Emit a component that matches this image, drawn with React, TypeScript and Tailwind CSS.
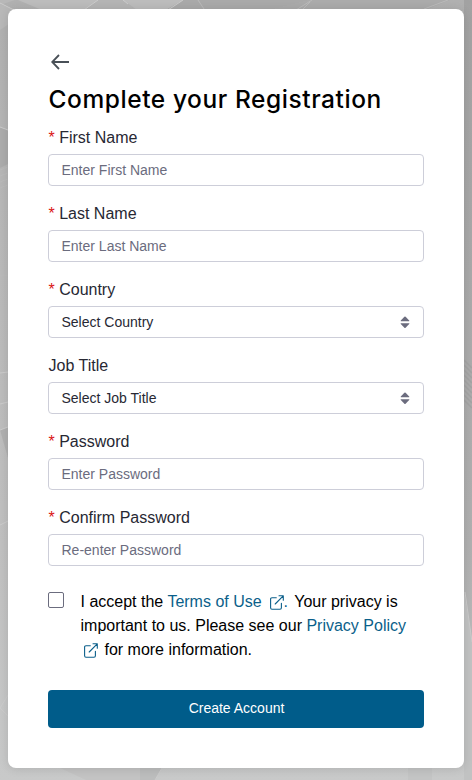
import { useState } from 'react';

interface FieldProps {
  id: string;
  label: string;
  placeholder: string;
  required?: boolean;
  type?: string;
}

const Label = ({ id, label, required }: { id: string; label: string; required?: boolean }) => (
  <label htmlFor={id} className="mb-1 block pl-[0.5px] text-base leading-6 text-[#272833]">
    {required && <span className="text-[#da1414]">* </span>}
    {label}
  </label>
);

const TextField = ({ id, label, placeholder, required, type = 'text' }: FieldProps) => (
  <div className="mb-4">
    <Label id={id} label={label} required={required} />
    <input
      id={id}
      type={type}
      placeholder={placeholder}
      className="block h-8 w-full rounded border border-[#cdced9] bg-white px-[12.5px] text-sm text-[#272833] placeholder:text-[#6b6c7e] placeholder:opacity-100"
    />
  </div>
);

const SelectField = ({ id, label, placeholder, required }: FieldProps) => (
  <div className="mb-4">
    <Label id={id} label={label} required={required} />
    <button
      id={id}
      type="button"
      className="flex h-8 w-full items-center justify-between rounded border border-[#cdced9] bg-white px-[12.5px] text-sm text-[#272833]"
    >
      {placeholder}
      <svg className="mr-[0.5px]" width="10" height="12" viewBox="0 0 10 12" fill="#6b6c7e">
        <path d="M1 5.2Q0.3 5.2 0.8 4.5L4.4 0.7Q5 0.3 5.6 0.7L9.2 4.5Q9.7 5.2 9 5.2Z" />
        <path d="M1 7.2Q0.3 7.2 0.8 7.9L4.4 11.7Q5 12.1 5.6 11.7L9.2 7.9Q9.7 7.2 9 7.2Z" />
      </svg>
    </button>
  </div>
);

const ExternalIcon = () => (
  <svg
    className="ml-[3.5px] inline-block align-[-3px]"
    width="14"
    height="15"
    viewBox="0 0 14 15"
    fill="none"
    stroke="currentColor"
    strokeWidth="1.1"
    strokeLinecap="round"
    strokeLinejoin="round"
  >
    <path d="M6.3 2.7H2Q0.6 2.7 0.6 4.1V12.8Q0.6 14.2 2 14.2H10Q11.4 14.2 11.4 12.8V8.2" />
    <path d="M9 0.8H13.3V5.2M13 1.1L5.2 9" />
  </svg>
);

const Backdrop = () => (
  <svg
    className="absolute inset-0 h-full w-full"
    viewBox="0 0 472 780"
    preserveAspectRatio="none"
    aria-hidden="true"
  >
    <defs>
      <linearGradient id="shade" x1="0" y1="0" x2="0" y2="1">
        <stop offset="0" stopColor="#b0b0b0" />
        <stop offset="0.3" stopColor="#b8b8b8" />
        <stop offset="0.7" stopColor="#c0c0c0" />
        <stop offset="1" stopColor="#c8c9c9" />
      </linearGradient>
      <linearGradient id="edge" x1="0" y1="0" x2="0" y2="1">
        <stop offset="0" stopColor="#a2a2a2" />
        <stop offset="0.7" stopColor="#b0b0b0" />
        <stop offset="1" stopColor="#c4c5c5" />
      </linearGradient>
    </defs>
    <rect width="472" height="780" fill="url(#shade)" />
    <path d="M0 0H15L0 5Z M0 4L24 14L0 30Z" fill="#b8b8b8" />
    <path d="M18 0H98L84 10H42Z" fill="#bcbcbc" />
    <path d="M98 0H123L137 10H86Z" fill="#b4b4b4" />
    <path d="M123 0H183L166 10H137Z" fill="#bcbcbc" />
    <path d="M183 0H310L270 10H166Z" fill="#a9a9a9" />
    <path d="M310 0H450L425 10H270Z" fill="#ababab" />
    <path d="M464 0H472V780H464Z" fill="url(#edge)" />
    <path d="M0 127L8 130V164L0 168Z" fill="#acacac" />
    <path d="M0 430L8 427V458Z" fill="#b0b0b0" />
    <path d="M464 592L472 640V780H464Z" fill="#c1c2c2" />
    <path d="M140 768H162L155 780H140Z" fill="#bcbdbd" />
    <path d="M60 768H140V780H86Z" fill="#c3c3c3" />
    <path d="M408 768H432V780H408Z" fill="#c3c4c4" />
    <g fill="none" stroke="#cbcbcb" strokeWidth="1">
      <path d="M0 3L14 10M98 0L84 10M123 0L128 4M183 0L168 10" />
      <path d="M0 127L8 130M0 373L8 372M0 404L8 402M0 430L8 427M0 525L8 521M0 708L8 695M0 708L8 716M465 592L472 642" />
      <path d="M162 768L155 780" />
    </g>
    <g fill="none" stroke="#bababa" strokeWidth="1">
      <path d="M198 0L204 9M448 0L424 9" />
      <path d="M0 170L8 167M0 176L8 173M0 182L8 179M0 188L8 185M0 276H8" />
      <path d="M296 10L312 0M302 10L310 2" />
    </g>
    <path
      d="M464 360L472 368M464 365L472 373M464 370L472 378M464 375L472 383M464 380L472 388M464 385L472 393M464 390L472 398M464 395L472 403M464 400L472 408"
      fill="none"
      stroke="#a3a3a3"
      strokeWidth="1.5"
    />
  </svg>
);

const App = () => {
  const [accepted, setAccepted] = useState(false);

  return (
    <div className="relative h-[780px] w-full overflow-hidden px-2 pt-[9px] font-['Liberation_Sans',Arial,sans-serif]">
      <Backdrop />
      <main className="relative h-[759px] rounded-lg bg-white px-10 pt-[42px] shadow-[0_1px_10px_rgba(0,0,0,0.12)]">
        <button type="button" aria-label="Back" className="ml-[3px] block h-[22px] text-[#495057]">
          <svg width="19" height="16" viewBox="0 0 19 16" fill="none" stroke="currentColor" strokeWidth="1.8">
            <path d="M18 8H1.5M8 1L1.2 8L8 15" />
          </svg>
        </button>
        <h1 className="mt-2.5 h-[43px] pl-[0.5px] font-[Inter,sans-serif] text-[24.5px] leading-8 font-medium tracking-[0.57px] whitespace-nowrap text-black">
          Complete your Registration
        </h1>

        <form onSubmit={(e) => e.preventDefault()}>
          <TextField id="firstName" label="First Name" placeholder="Enter First Name" required />
          <TextField id="lastName" label="Last Name" placeholder="Enter Last Name" required />
          <SelectField id="country" label="Country" placeholder="Select Country" required />
          <SelectField id="jobTitle" label="Job Title" placeholder="Select Job Title" />
          <TextField id="password" label="Password" placeholder="Enter Password" type="password" required />
          <TextField
            id="confirmPassword"
            label="Confirm Password"
            placeholder="Re-enter Password"
            type="password"
            required
          />

          <div className="mt-6 flex items-start">
            <input
              type="checkbox"
              checked={accepted}
              onChange={(e) => setAccepted(e.target.checked)}
              aria-label="I accept the Terms of Use"
              className="mt-0.5 mr-[16.5px] h-4 w-4 shrink-0 appearance-none rounded-[2px] border border-[#6b6c7e] bg-white checked:bg-[#005c8a]"
            />
            <p className="text-base leading-6 whitespace-nowrap text-black">
              I accept the{' '}
              <a href="#" className="text-[#0b5f8a]">
                Terms of Use <ExternalIcon />.
              </a>
              <span className="ml-[2px]"> Your privacy is</span>
              <br />
              important to us. Please see our{' '}
              <a href="#" className="text-[#0b5f8a]">
                Privacy Policy
                <br />
                <ExternalIcon />
              </a>
              <span className="ml-[2px]"> for more information.</span>
            </p>
          </div>

          <button
            type="submit"
            className="mt-7 block h-[38px] w-full rounded bg-[#005c8a] pb-0.5 pl-px text-center text-sm text-white"
          >
            Create Account
          </button>
        </form>
      </main>
    </div>
  );
};

export default App;
